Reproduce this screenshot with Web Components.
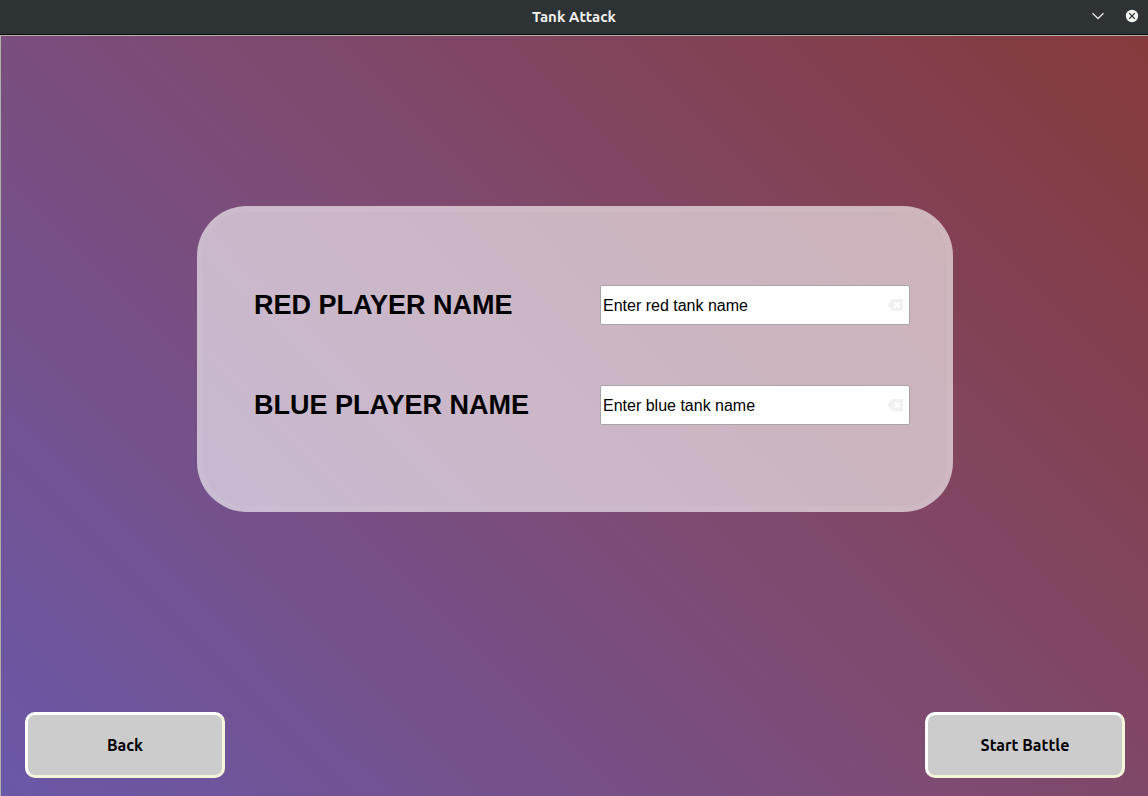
<!DOCTYPE html>
<html lang="en">
<head>
<meta charset="utf-8">
<title>Tank Attack</title>
<style>
html, body { height: 100%; margin: 0; }
body { font-family: "Liberation Sans", Arial, sans-serif; color: #000; }
</style>
</head>
<body>
<tank-window>
  <window-titlebar slot="titlebar">Tank Attack</window-titlebar>
  <player-panel>
    <name-field label="RED PLAYER NAME" value="Enter red tank name"></name-field>
    <name-field label="BLUE PLAYER NAME" value="Enter blue tank name"></name-field>
  </player-panel>
  <game-button slot="actions">Back</game-button>
  <game-button slot="actions">Start Battle</game-button>
</tank-window>
<script>
function define(name, html, setup) {
  const template = document.createElement('template');
  template.innerHTML = html;
  customElements.define(name, class extends HTMLElement {
    constructor() {
      super();
      this.attachShadow({ mode: 'open' }).append(template.content.cloneNode(true));
    }
    connectedCallback() { if (setup) setup(this, this.shadowRoot); }
  });
}

define('tank-window', `
<style>
:host { display: flex; flex-direction: column; min-height: 100vh; box-sizing: border-box; background: #2d3133; }
main { flex: 1; display: flex; flex-direction: column; box-sizing: border-box;
  border: solid #b2aeaa; border-width: 1px 0 0 1px;
  background: linear-gradient(45deg, #6a58a8, #7e4b73 50%, #863a3b); }
.stage { flex: 1; display: flex; flex-direction: column; align-items: center; padding: 170px 0 24px 1px; }
footer { display: flex; justify-content: space-between; padding: 0 23px 18px 24px; }
</style>
<slot name="titlebar"></slot>
<main>
  <div class="stage"><slot></slot></div>
  <footer><slot name="actions"></slot></footer>
</main>`);

define('window-titlebar', `
<style>
:host { display: block; background: #2d3234; border-bottom: 1px solid #0c0d0d;
  border-radius: 2px 2px 0 0; font: bold 15px/34px Ubuntu, "Noto Sans", sans-serif; color: #f0f0ee; }
header { display: grid; grid-template-columns: 1fr auto 1fr; height: 34px; }
h1 { grid-column: 2; margin: 0; font: inherit; }
.controls { display: flex; justify-content: flex-end; align-items: center; gap: 18px; height: 32px; padding-right: 8px; }
button { display: block; width: 16px; height: 16px; padding: 0; border: 0; background: none; }
svg { display: block; }
</style>
<header>
  <h1><slot></slot></h1>
  <div class="controls">
    <button type="button" aria-label="Minimize"><svg width="16" height="16" viewBox="0 0 16 16"><path d="M2.500 5.200 8 10.500l5.500-5.300" fill="none" stroke="#e4e5e3" stroke-width="1.300"/></svg></button>
    <button type="button" aria-label="Close"><svg width="16" height="16" viewBox="0 0 16 16"><circle cx="8" cy="8" r="6.200" fill="#f1f1ef"/><path d="m5.200 5.200 5.600 5.600m0-5.600-5.600 5.600" stroke="#25292b" stroke-width="1.200"/></svg></button>
  </div>
</header>`);

define('player-panel', `
<style>
:host { display: flex; flex-direction: column; gap: 60px; box-sizing: border-box; width: 66%; min-width: 700px; max-width: 756px;
  padding: 73px 37px 81px 51px; border: 6px solid rgba(255,255,255,.05); border-radius: 50px;
  background: rgba(255,255,255,.6); }
</style>
<slot></slot>`);

define('name-field', `
<style>
:host { display: flex; align-items: center; justify-content: space-between; height: 40px; }
label { font-size: 27px; line-height: 32px; font-weight: bold; white-space: nowrap; }
.box { display: flex; align-items: center; box-sizing: border-box; width: 310px; height: 40px;
  border: 1px solid #a9a5a6; border-radius: 2px; background: #fff; padding: 0 6px 0 2px; }
input { flex: 1; min-width: 0; padding: 2px 0 0; border: 0; outline: 0; background: none; color: #000; font: 16px/20px "Liberation Sans", Arial, sans-serif; }
button { padding: 0; border: 0; background: none; }
svg { display: block; }
</style>
<label for="name"></label>
<div class="box">
  <input id="name" type="text">
  <button type="button" aria-label="Clear"><svg width="16" height="12" viewBox="0 0 16 12"><path d="M0 6 5 0h11v12H5z" fill="#f1f1f1"/><path d="m7.500 3.500 5 5m0-5-5 5" stroke="#fff" stroke-width="1.800"/></svg></button>
</div>`, (host, root) => {
  root.querySelector('label').textContent = host.getAttribute('label');
  const input = root.querySelector('input');
  input.value = host.getAttribute('value');
  root.querySelector('button').onclick = () => { input.value = ''; input.focus(); };
});

define('game-button', `
<style>
:host { display: block; }
button { display: block; box-sizing: border-box; width: 200px; height: 66px; padding: 0; border: 3px solid; border-color: #fff #f5f5dc #f5f5dc #fff;
  border-radius: 10px; background: #ccc; color: #000; font: bold 16px/20px Ubuntu, "Noto Sans", sans-serif; }
</style>
<button type="button"><slot></slot></button>`);
</script>
</body>
</html>
